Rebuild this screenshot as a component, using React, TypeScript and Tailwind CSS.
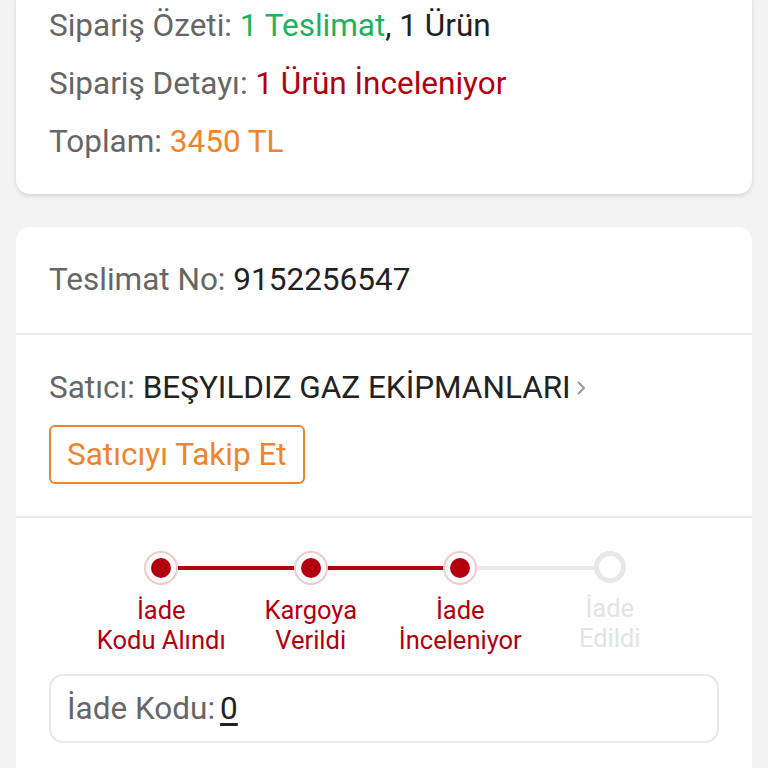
import React from "react";

interface Step {
  top: string;
  bottom: string;
  done: boolean;
}

const steps: Step[] = [
  { top: "İade", bottom: "Kodu Alındı", done: true },
  { top: "Kargoya", bottom: "Verildi", done: true },
  { top: "İade", bottom: "İnceleniyor", done: true },
  { top: "İade", bottom: "Edildi", done: false },
];

const Stepper: React.FC = () => {
  return (
    <div className="flex justify-center pl-[3px]">
      {steps.map((step, i) => {
        const next = steps[i + 1];
        return (
          <div key={i} className="relative flex w-[149.5px] flex-col items-center">
            {next && (
              <div
                className={`absolute left-[91px] top-[15px] h-[4px] w-[118px] ${
                  next.done ? "bg-[#b3000f]" : "bg-[#e8e8e8]"
                }`}
              />
            )}
            {step.done ? (
              <div className="relative flex h-[34px] w-[34px] items-center justify-center rounded-full border-2 border-[#f4c9cc] bg-white">
                <div className="h-[20px] w-[20px] rounded-full bg-[#b3000f]" />
              </div>
            ) : (
              <div className="relative h-[32px] w-[32px] rounded-full border-[5px] border-[#e8e8e8] bg-white" />
            )}
            <div
              className={`mt-[10px] whitespace-nowrap text-center text-[25.5px] leading-[30px] ${
                step.done ? "text-[#b3000f]" : "text-[#e3e3e3]"
              }`}
            >
              <div>{step.top}</div>
              <div>{step.bottom}</div>
            </div>
          </div>
        );
      })}
    </div>
  );
};

export default function App() {
  return (
    <div
      className="min-h-[768px] overflow-hidden bg-[#f3f3f3] px-4 text-[31.5px] text-[#666666]"
      style={{ fontFamily: "Roboto, 'Noto Sans', sans-serif" }}
    >
      <div className="-mt-[3px] rounded-b-[14px] bg-white px-[33px] pb-[23px] shadow-[0_2px_4px_rgba(0,0,0,0.12)]">
        <div className="flex h-[58px] items-center">
          <span>Sipariş Özeti:&nbsp;</span>
          <span className="text-[#1db35c]">1 Teslimat</span>
          <span className="text-[#222222]">, 1 Ürün</span>
        </div>
        <div className="flex h-[58px] items-center">
          <span>Sipariş Detayı:&nbsp;</span>
          <span className="text-[#b3000f]">1 Ürün İnceleniyor</span>
        </div>
        <div className="flex h-[58px] items-center">
          <span>Toplam:&nbsp;</span>
          <span className="text-[#f0842a]">3450 TL</span>
        </div>
      </div>

      <div className="mt-[33px] rounded-t-[14px] bg-white">
        <div className="flex h-[108px] items-center border-b-2 border-[#ebebeb] px-[33px]">
          <span>Teslimat No:&nbsp;</span>
          <span className="text-[#222222]">9152256547</span>
        </div>

        <div className="border-b-2 border-[#ebebeb] px-[33px] pb-[32px] pt-[36px]">
          <div className="flex h-[34px] items-center">
            <span>Satıcı:&nbsp;</span>
            <span className="text-[#222222]">BEŞYILDIZ GAZ EKİPMANLARI</span>
            <svg width="14" height="18" viewBox="0 0 14 18" className="ml-[3px]">
              <polyline points="4,3 10,9 4,15" fill="none" stroke="#9a9a9a" strokeWidth="2" />
            </svg>
          </div>
          <button className="mt-[20px] flex h-[59px] items-center rounded-[6px] border-2 border-[#f0842a] px-[16px] text-[31.5px] text-[#f0842a]">
            Satıcıyı Takip Et
          </button>
        </div>

        <div className="px-[33px] pt-[33px]">
          <Stepper />
          <div className="mt-[19px] flex h-[69px] items-center rounded-[14px] border-2 border-[#e8e8e8] px-[16px]">
            <span>İade Kodu:</span>
            <span className="ml-[5px] text-[#222222] underline underline-offset-4">0</span>
          </div>
          <div className="h-[40px]" />
        </div>
      </div>
    </div>
  );
}
